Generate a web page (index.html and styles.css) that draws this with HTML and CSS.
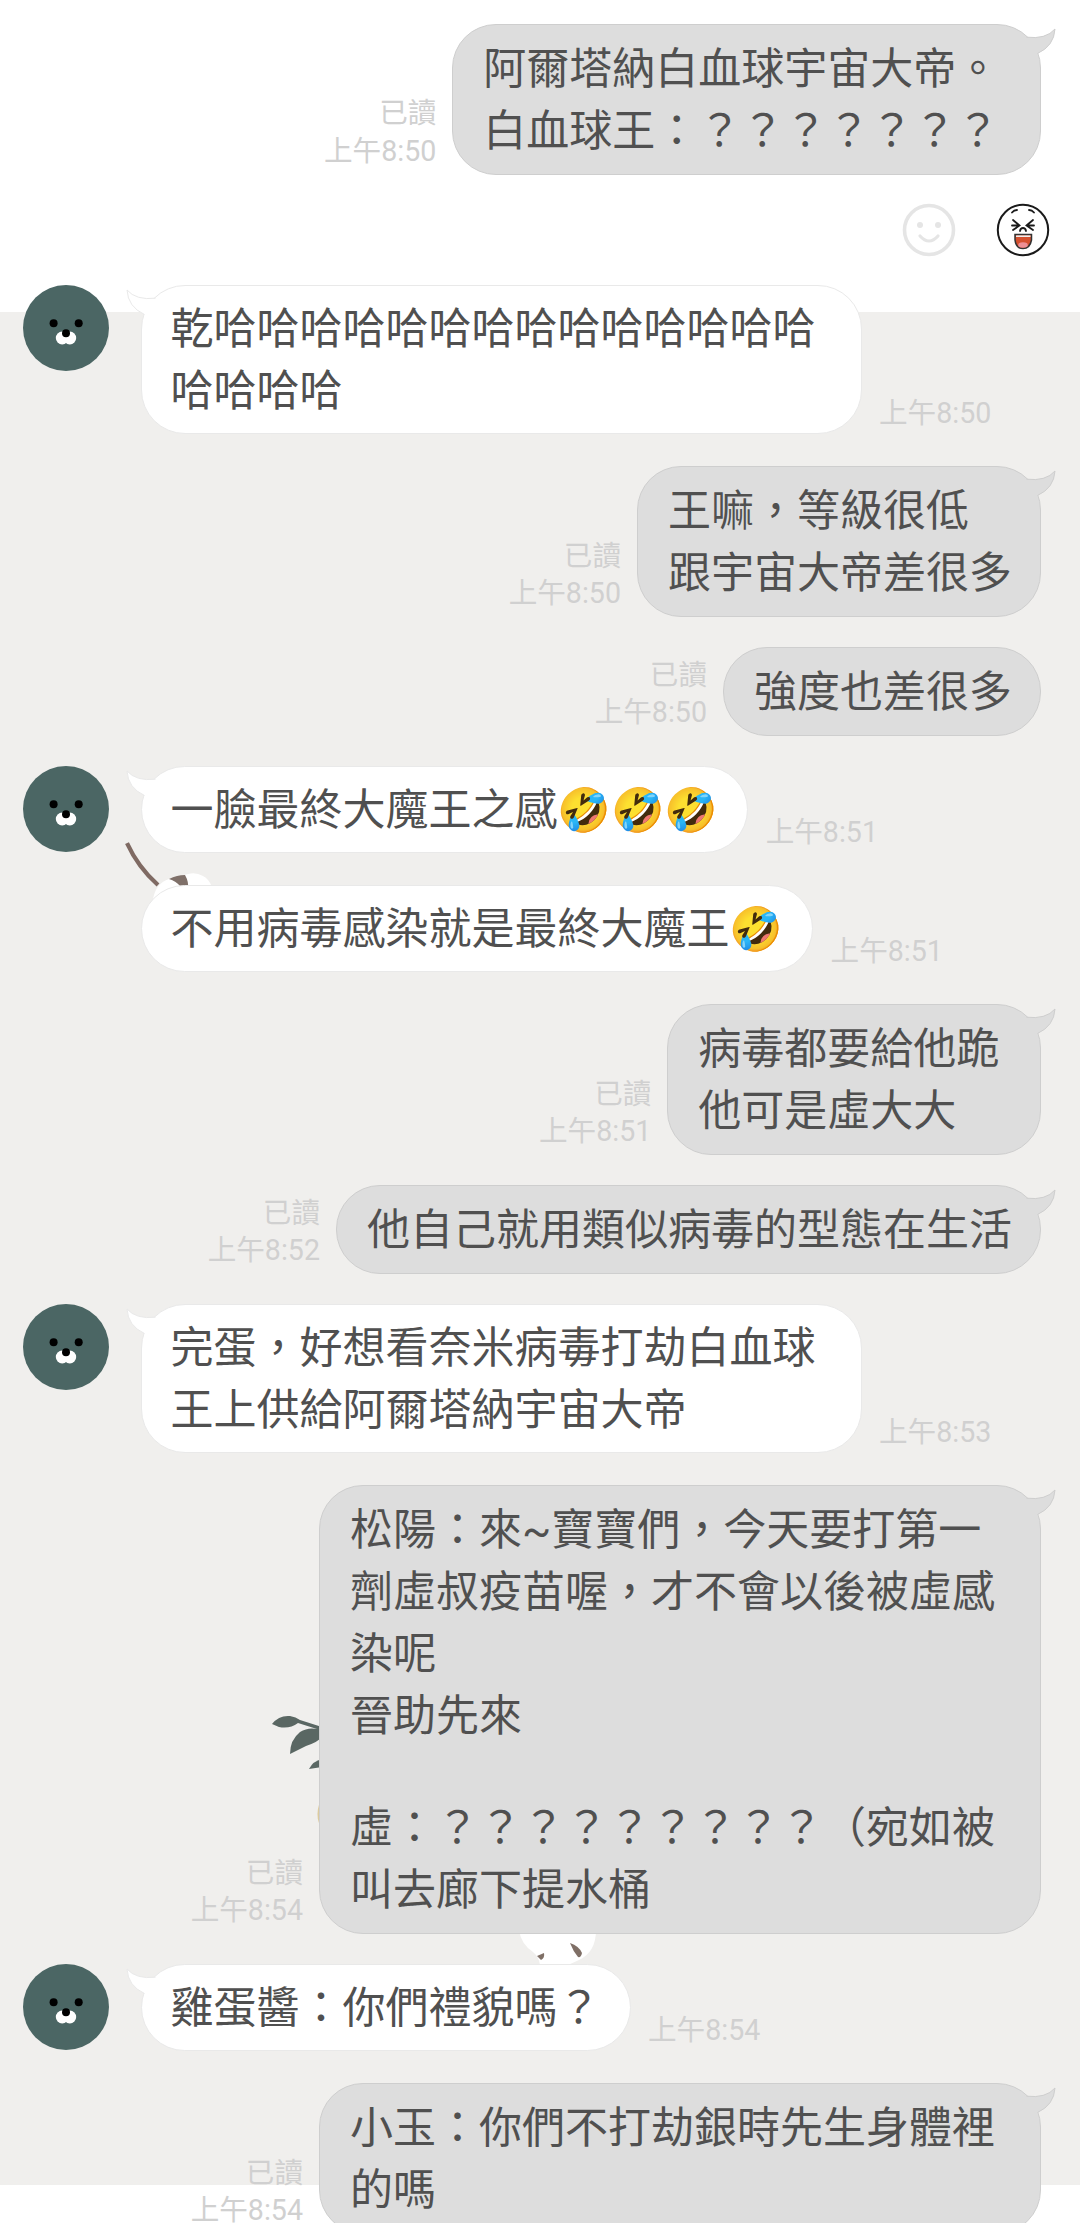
FILE: index.html
```html
<!DOCTYPE html>
<html lang="zh-Hant">
<head>
<meta charset="utf-8">
<title>聊天</title>
<link rel="stylesheet" href="styles.css">
</head>
<body>
<svg class="defs" width="0" height="0" aria-hidden="true">
  <symbol id="avatar" viewBox="0 0 86 86">
    <circle cx="43" cy="43" r="43" fill="#4b6664"/>
    <ellipse cx="39.200" cy="53" rx="6.400" ry="6.500" fill="#fff"/>
    <ellipse cx="46.800" cy="53" rx="6.400" ry="6.500" fill="#fff"/>
    <circle cx="30.600" cy="38.200" r="4"/>
    <circle cx="55.700" cy="38.200" r="4"/>
    <circle cx="43" cy="48.300" r="4"/>
  </symbol>
  <symbol id="tail" viewBox="0 0 36 34">
    <path class="tail-fill" d="M0 9L6.500 13.200Q26 15.500 35 5Q34 22 17.500 29.500L17.500 33L0 33Z"/>
    <path class="tail-line" d="M6.500 13.200Q26 15.500 35 5Q34 22 17.500 29.500"/>
  </symbol>
</svg>
<main class="chat">
  <svg class="wallpaper" width="1080" height="2223" viewBox="0 0 1080 2223" aria-hidden="true">
    <g transform="translate(0 -3)">
      <path d="M127 846Q138 870 158 888" fill="none" stroke="#7f6a63" stroke-width="4.200"/>
      <path d="M153 902Q156 886 169 882L188 877Q196 875 203 879Q209 882 212 890V902Z" fill="#fff"/>
      <path d="M169 882Q177 878 185 878Q189 885 188 892L181 890Q176 884 169 882Z" fill="#7f7069"/>
    </g>
    <path d="M272 1724Q279 1715 290 1716Q296 1717 300 1720L322 1727L322 1737Q318 1742 306 1746L290 1754Q290 1740 300 1732Q308 1727 317 1729L298 1723Q290 1729 279 1727Z" fill="#5a6763"/>
    <path d="M309 1769Q313 1761 322 1759L322 1767Z" fill="#5a6763"/>
    <ellipse cx="322" cy="1814" rx="4.500" ry="12" fill="#dccb9e"/>
    <path d="M519 1930H596Q596 1952 579 1960L568 1965H540Q539 1957 533 1952Q521 1944 519 1930Z" fill="#fff"/>
    <path d="M570 1943Q579 1946 582 1953Q581 1958 578 1957Q573 1951 570 1943Z" fill="#7f6f66"/>
    <path d="M537 1956L544 1953Q545 1958 541 1960Z" fill="#7f6f66"/>
  </svg>

  <section class="row sent">
    <div class="meta"><span>已讀</span><span>上午8:50</span></div>
    <div class="bubble spaced"><svg class="tail"><use href="#tail"/></svg><p>阿爾塔納白血球宇宙大帝。&nbsp;</p><p>白血球王：？？？？？？？</p></div>
  </section>
  <div class="reactions">
    <svg width="54" height="54" viewBox="0 0 54 54">
      <circle cx="27" cy="27" r="24.500" fill="none" stroke="#e5e5e5" stroke-width="3.600"/>
      <circle cx="18" cy="22" r="3" fill="#e5e5e5"/><circle cx="36" cy="22" r="3" fill="#e5e5e5"/>
      <path d="M18 33Q27 43 36 33" fill="none" stroke="#e5e5e5" stroke-width="3.200" stroke-linecap="round"/>
    </svg>
    <svg width="54" height="54" viewBox="0 0 54 54">
      <circle cx="27" cy="27" r="25.200" fill="#fff" stroke="#1a1a1a" stroke-width="2"/>
      <g fill="none" stroke="#1a1a1a" stroke-width="1.800" stroke-linecap="round">
        <path d="M16 9.500Q18 7 21 7M33 7Q36 7 38 9.500"/>
        <path d="M17 17L23.500 22.500L17 27M16 22.500H23M37 17L30.500 22.500L37 27M38 22.500H31M24 28Q24.500 25 27 25Q29.500 25 30 28"/>
      </g>
      <path d="M19 31.500H35.500V37Q34 45.500 27 45.500Q20 45.500 19 37Z" fill="#d5502f" stroke="#333" stroke-width="1.500"/>
      <path d="M20 33.200H34.500" stroke="#eee" stroke-width="1.600"/>
      <ellipse cx="27" cy="42" rx="4.800" ry="2.800" fill="#ee8f95"/>
    </svg>
  </div>
  <section class="row received">
    <svg class="avatar"><use href="#avatar"/></svg>
    <div class="bubble wide"><svg class="tail"><use href="#tail"/></svg><p>乾哈哈哈哈哈哈哈哈哈哈哈哈哈哈</p><p>哈哈哈哈</p></div>
    <div class="meta"><span>上午8:50</span></div>
  </section>
  <section class="row sent">
    <div class="meta"><span>已讀</span><span>上午8:50</span></div>
    <div class="bubble"><svg class="tail"><use href="#tail"/></svg><p>王嘛，等級很低</p><p>跟宇宙大帝差很多</p></div>
  </section>
  <section class="row sent">
    <div class="meta"><span>已讀</span><span>上午8:50</span></div>
    <div class="bubble"><p>強度也差很多</p></div>
  </section>
  <section class="row received">
    <svg class="avatar"><use href="#avatar"/></svg>
    <div class="bubble"><svg class="tail"><use href="#tail"/></svg><p>一臉最終大魔王之感🤣🤣🤣</p></div>
    <div class="meta"><span>上午8:51</span></div>
  </section>
  <section class="row received follow">
    <div class="bubble"><p>不用病毒感染就是最終大魔王🤣</p></div>
    <div class="meta"><span>上午8:51</span></div>
  </section>
  <section class="row sent">
    <div class="meta"><span>已讀</span><span>上午8:51</span></div>
    <div class="bubble spaced"><svg class="tail"><use href="#tail"/></svg><p>病毒都要給他跪&nbsp;</p><p>他可是虛大大</p></div>
  </section>
  <section class="row sent">
    <div class="meta"><span>已讀</span><span>上午8:52</span></div>
    <div class="bubble"><svg class="tail"><use href="#tail"/></svg><p>他自己就用類似病毒的型態在生活</p></div>
  </section>
  <section class="row received">
    <svg class="avatar"><use href="#avatar"/></svg>
    <div class="bubble wide"><svg class="tail"><use href="#tail"/></svg><p>完蛋，好想看奈米病毒打劫白血球</p><p>王上供給阿爾塔納宇宙大帝</p></div>
    <div class="meta"><span>上午8:53</span></div>
  </section>
  <section class="row sent">
    <div class="meta"><span>已讀</span><span>上午8:54</span></div>
    <div class="bubble wide"><svg class="tail"><use href="#tail"/></svg><p>松陽：來~寶寶們，今天要打第一</p><p>劑虛叔疫苗喔，才不會以後被虛感</p><p>染呢</p><p>晉助先來</p><p class="blank"></p><p>虛：？？？？？？？？？（宛如被</p><p>叫去廊下提水桶</p></div>
  </section>
  <section class="row received">
    <svg class="avatar"><use href="#avatar"/></svg>
    <div class="bubble"><svg class="tail"><use href="#tail"/></svg><p>雞蛋醬：你們禮貌嗎？</p></div>
    <div class="meta"><span>上午8:54</span></div>
  </section>
  <section class="row sent">
    <div class="meta"><span>已讀</span><span>上午8:54</span></div>
    <div class="bubble wide"><svg class="tail"><use href="#tail"/></svg><p>小玉：你們不打劫銀時先生身體裡</p><p>的嗎</p></div>
  </section>
</main>
</body>
</html>
```
FILE: styles.css
```css
* { box-sizing: border-box; }
body { margin: 0; }
p { margin: 0; }

.defs { position: absolute; }

.chat {
  position: relative;
  width: 1080px;
  height: 2223px;
  overflow: hidden;
  padding-top: 23.500px;
  background: linear-gradient(#fff 312px, #f0efed 312px, #f0efed 2185px, #fff 2185px);
  font-family: Roboto, "Noto Sans CJK TC", "Noto Color Emoji", sans-serif;
}

.wallpaper {
  position: absolute;
  top: 0;
  left: 0;
}

.row {
  position: relative;
  display: flex;
  align-items: flex-end;
}

.sent {
  justify-content: flex-end;
  gap: 16px;
  padding-right: 39px;
  margin-bottom: 30px;
}

.received {
  padding-left: 23px;
  margin-bottom: 32px;
}

.follow { padding-left: 140.500px; }

.avatar {
  width: 86px;
  height: 86px;
  margin-right: 31.500px;
  align-self: flex-start;
}

.bubble {
  position: relative;
  padding: 13px 28px 12px 30px;
  border: 1px solid #cecece;
  border-radius: 44px;
  background: #ddd;
  color: #505050;
  font-size: 43px;
  line-height: 62px;
  white-space: nowrap;
}

.bubble p { height: 62px; }
.bubble .blank { height: 50px; }
.wide { width: 722px; }
.spaced { padding-right: 30px; }

.received .bubble {
  padding: 12px 29px 11px 29px;
  border-color: #e9e9e9;
  background: #fff;
}

.received .wide { width: 721px; }

.tail {
  position: absolute;
  top: -1px;
  right: -16px;
  width: 36px;
  height: 34px;
  fill: #ddd;
  stroke: #cecece;
}

.received .tail {
  right: auto;
  left: -16px;
  transform: scaleX(-1);
  fill: #fff;
  stroke: #e9e9e9;
}

.tail-fill { stroke: none; }
.tail-line { fill: none; }

.meta {
  display: flex;
  flex-direction: column;
  align-items: flex-end;
  padding-bottom: 4.500px;
  color: #d0d0d0;
  font-size: 28.600px;
  line-height: 37.500px;
  white-space: nowrap;
}

.received .meta { padding: 0 0 2px 17.500px; }

.reactions {
  display: flex;
  justify-content: flex-end;
  gap: 40px;
  height: 82.500px;
  margin-top: -2px;
  padding-right: 30px;
}
```
